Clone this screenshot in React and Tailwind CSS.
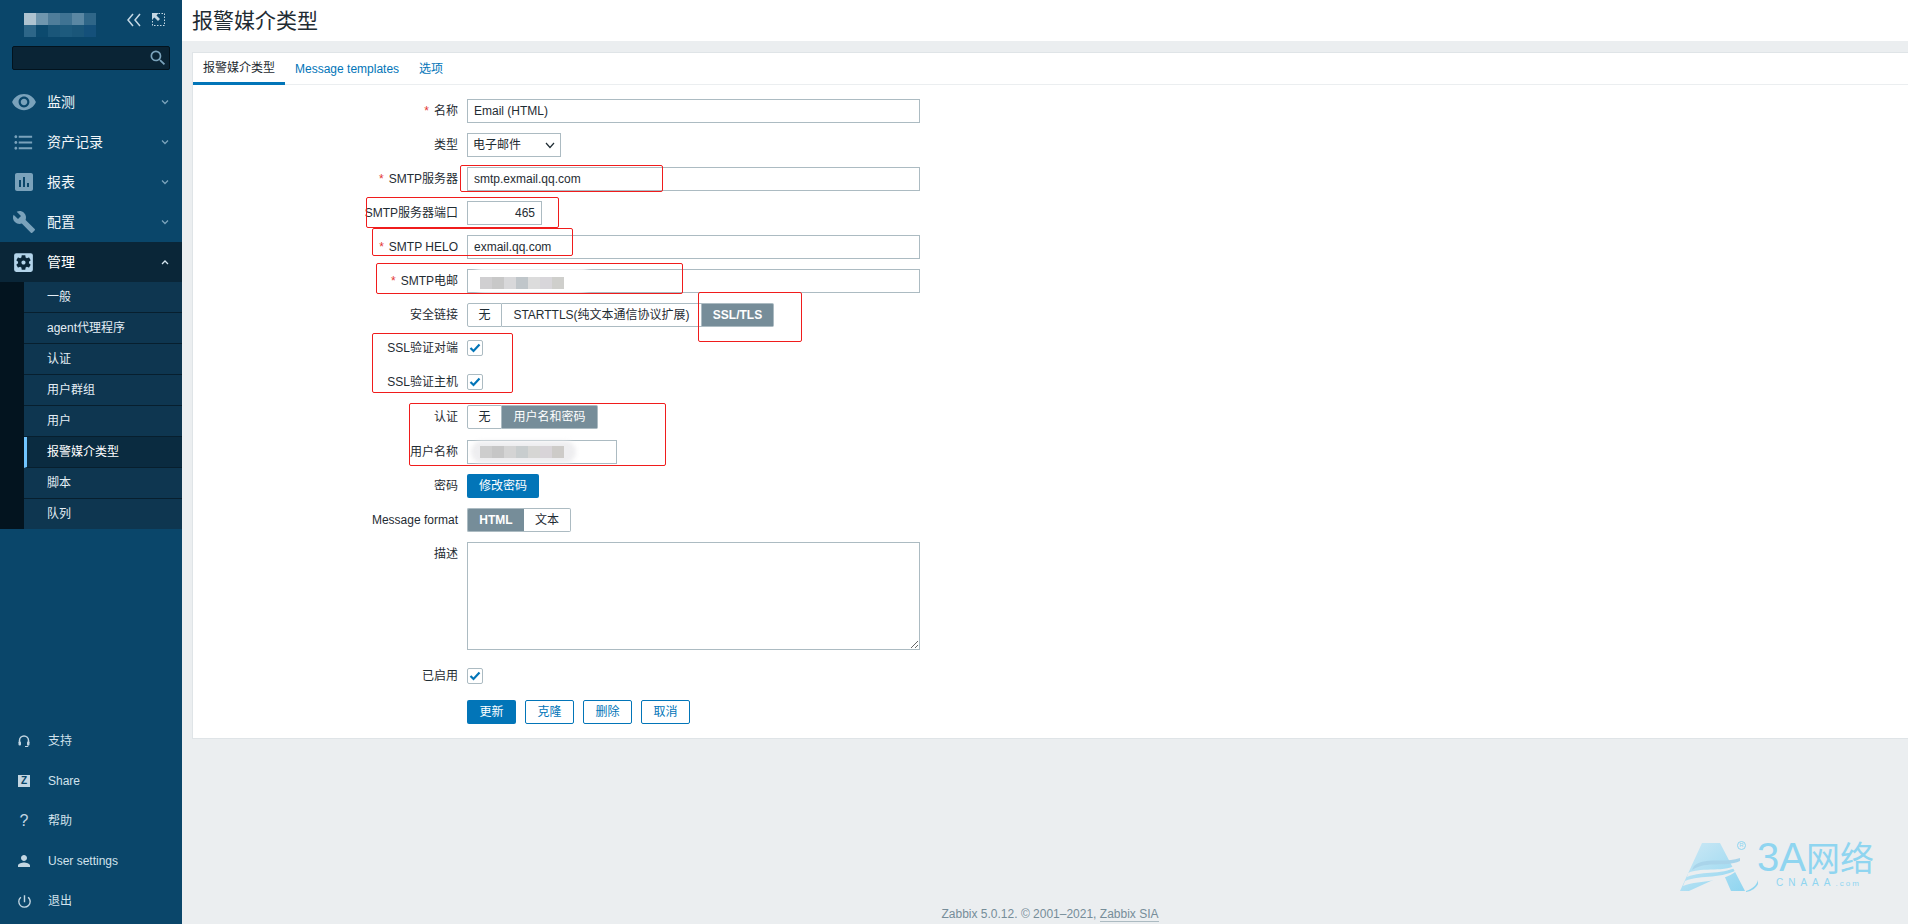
// App.jsx
// Zabbix media type edit page, with the red annotation boxes and watermark from the screenshot.

import { useState } from "react";
import {
  MdVisibility,
  MdFormatListBulleted,
  MdAssessment,
  MdBuild,
  MdSettingsApplications,
  MdSearch,
  MdPerson,
  MdPowerSettingsNew,
} from "react-icons/md";

const mainMenu = [
  { label: "监测", icon: MdVisibility, size: 26 },
  { label: "资产记录", icon: MdFormatListBulleted, size: 23 },
  { label: "报表", icon: MdAssessment, size: 24 },
  { label: "配置", icon: MdBuild, size: 24 },
];

const subMenu = ["一般", "agent代理程序", "认证", "用户群组", "用户", "报警媒介类型", "脚本", "队列"];

const redBoxes = [
  "left-[460px] top-[165px] w-[203px] h-[27px]",
  "left-[366px] top-[197px] w-[193px] h-[31px]",
  "left-[372px] top-[228px] w-[201px] h-[28px]",
  "left-[376px] top-[263px] w-[307px] h-[31px]",
  "left-[698px] top-[292px] w-[104px] h-[50px]",
  "left-[372px] top-[333px] w-[141px] h-[60px]",
  "left-[409px] top-[403px] w-[257px] h-[63px]",
];

function Chevron({ up }) {
  return (
    <svg width="8" height="6" viewBox="0 0 8 6" className={up ? "text-[#d5e6f1]" : "text-[#7aa2bb]"}>
      <polyline points={up ? "1,5 4,2 7,5" : "1,1.5 4,4.5 7,1.5"} fill="none" stroke="currentColor" strokeWidth="1.3" />
    </svg>
  );
}

function Mosaic({ cells }) {
  return (
    <div className="flex">
      {cells.map((c, i) => (
        <div key={i} className={`w-[12px] h-[12px] ${c}`} />
      ))}
    </div>
  );
}

function Sidebar() {
  return (
    <aside className="w-[182px] h-full shrink-0 bg-[#0a466a] flex flex-col text-[#f2f7fa]">
      {/* logo + collapse / kiosk */}
      <div className="h-[46px] flex pl-[24px] pt-[13px]">
        <div className="flex flex-col w-[72px]">
          <Mosaic cells={["bg-[#aec3d0]", "bg-[#6f96ae]", "bg-[#4f7d9a]", "bg-[#3f7393]", "bg-[#5a87a3]", "bg-[#2f6688]"]} />
          <Mosaic cells={["bg-[#2d6688]", "bg-[#0c4a6e]", "bg-[#1a5679]", "bg-[#1d5a7d]", "bg-[#1a5679]", "bg-[#14507a]"]} />
        </div>
        <svg width="16" height="14" viewBox="0 0 16 14" className="ml-[30px] text-[#c5d8e4]">
          <path d="M7 1 L2 7 L7 13 M14 1 L9 7 L14 13" fill="none" stroke="currentColor" strokeWidth="1.5" />
        </svg>
        <svg width="13" height="13" viewBox="0 0 13 13" className="ml-[10px] text-[#c5d8e4]">
          <rect x="0.5" y="0.5" width="12" height="12" fill="none" stroke="currentColor" strokeDasharray="1.5 1.5" />
          <path d="M0 0 H6.5 L4.5 2.5 L8 6 L6 8 L2.5 4.5 L0 6.5 Z" fill="currentColor" />
        </svg>
      </div>

      {/* search */}
      <div className="relative mx-[12px] h-[24px] bg-[#0a2435] border border-[#02131e] rounded-[2px]">
        <MdSearch size={20} className="absolute right-[1px] top-[1px] text-[#7aa2bb]" />
      </div>

      {/* main menu */}
      <nav className="mt-[12px] text-[14px]">
        {mainMenu.map((item) => (
          <div key={item.label} className="h-[40px] flex items-center">
            <div className="w-[47px] flex justify-center text-[#7aa2bb]">
              <item.icon size={item.size} />
            </div>
            <span>{item.label}</span>
            <span className="ml-auto mr-[13px] flex">
              <Chevron />
            </span>
          </div>
        ))}
        <div className="h-[40px] flex items-center bg-[#0a2638] text-white">
          <div className="w-[47px] flex justify-center text-[#b3d4ea]">
            <MdSettingsApplications size={25} />
          </div>
          <span>管理</span>
          <span className="ml-auto mr-[13px] flex">
            <Chevron up />
          </span>
        </div>
        <div className="flex bg-[#03141f] pl-[24px]">
          <ul className="flex-1 text-[12px]">
            {subMenu.map((s) => (
              <li
                key={s}
                className={
                  s === "报警媒介类型"
                    ? "h-[31px] flex items-center bg-[#0a2b40] border-b border-[#071f2e] border-l-[3px] border-l-[#70c5ff] pl-[20px] text-white"
                    : "h-[31px] last:h-[30px] last:border-b-0 flex items-center bg-[#0e3650] border-b border-[#071f2e] pl-[23px] text-[#e4eef5]"
                }
              >
                {s}
              </li>
            ))}
          </ul>
        </div>
      </nav>

      {/* bottom links */}
      <div className="mt-auto mb-[3px] text-[12px] text-[#d2e2ec]">
        <BottomLink label="支持">
          <svg width="12" height="13" viewBox="0 0 12 13" fill="none">
            <path d="M1.5 8 V5.5 a4.5 4.5 0 0 1 9 0 V8" stroke="currentColor" strokeWidth="1.5" />
            <rect x="0.5" y="6.5" width="2.5" height="4" rx="1" fill="currentColor" />
            <rect x="9" y="6.5" width="2.5" height="4" rx="1" fill="currentColor" />
            <path d="M10 10.5 V11.5 H7" stroke="currentColor" />
          </svg>
        </BottomLink>
        <BottomLink label="Share">
          <span className="w-[12px] h-[12px] bg-[#c3d6e2] text-[#0a466a] text-[10px] leading-[12px] font-bold text-center">Z</span>
        </BottomLink>
        <BottomLink label="帮助">
          <span className="text-[16px] text-[#c3d6e2]">?</span>
        </BottomLink>
        <BottomLink label="User settings">
          <MdPerson size={18} />
        </BottomLink>
        <BottomLink label="退出">
          <MdPowerSettingsNew size={17} />
        </BottomLink>
      </div>
    </aside>
  );
}

function BottomLink({ label, children }) {
  return (
    <div className="h-[40px] flex items-center">
      <div className="w-[48px] flex justify-center text-[#c3d6e2]">{children}</div>
      <span>{label}</span>
    </div>
  );
}

function Row({ label, required, className = "h-[24px]", labelClass = "items-center", children }) {
  return (
    <div className={`flex ${className}`}>
      <label className={`w-[265px] shrink-0 flex justify-end whitespace-nowrap ${labelClass}`}>
        {required && <span className="text-[#e33734] mr-[5px]">*</span>}
        {label}
      </label>
      <div className="ml-[9px] flex items-center">{children}</div>
    </div>
  );
}

function TextInput({ value, width = "w-[453px]", right }) {
  return (
    <input
      readOnly
      value={value}
      className={`${width} h-[24px] border border-[#acbbc2] bg-white px-[6px] text-[12px] outline-none ${right ? "text-right" : ""}`}
    />
  );
}

function Segmented({ options, active }) {
  return (
    <div className="flex h-[24px]">
      {options.map(([label, width], i) => {
        const on = label === active;
        const first = i === 0;
        const last = i === options.length - 1;
        // the Chinese labels stay regular when selected, only latin ones go bold
        const latin = /^[A-Za-z/]+$/.test(label);
        return (
          <div
            key={label}
            className={[
              "flex items-center justify-center border-y border-[#acbbc2]",
              width,
              on ? "bg-[#768d99] border-[#768d99] text-white" : "bg-white",
              on && latin ? "font-bold" : "",
              first ? "border-l rounded-l-[2px]" : "",
              last ? "border-r rounded-r-[2px]" : "",
              !on && !last ? "border-r" : "",
            ].join(" ")}
          >
            {label}
          </div>
        );
      })}
    </div>
  );
}

function Check() {
  const [on, setOn] = useState(true);
  return (
    <button
      onClick={() => setOn(!on)}
      className="w-[16px] h-[16px] border border-[#acbbc2] rounded-[2px] bg-white flex items-center justify-center"
    >
      {on && (
        <svg width="12" height="10" viewBox="0 0 12 10">
          <path d="M1.5 5 L4.5 8 L10.5 1.5" fill="none" stroke="#0275b8" strokeWidth="2.2" />
        </svg>
      )}
    </button>
  );
}

function Watermark() {
  return (
    <div className="absolute left-[1680px] top-[842px] w-[200px] h-[50px] text-[#8fd5f0]">
      <svg width="78" height="50" viewBox="0 0 78 50" className="absolute left-0 top-0">
        <defs>
          <linearGradient id="wm" x1="0" y1="0" x2="1" y2="1">
            <stop offset="0" stopColor="#cfe9f5" />
            <stop offset="1" stopColor="#8fd5f0" />
          </linearGradient>
        </defs>
        <path d="M0 49 L22 1 H40 L65 49 H51 L44 33 L9 49 Z" fill="url(#wm)" />
        <path d="M14 24 C26 14 44 22 60 16 L60 19 C44 26 28 18 12 28 Z" fill="#a9d4ea" />
        <path d="M8 31 C24 24 44 32 60 21 V23 C44 34 24 28 7 35 Z M5 39 C22 32 42 38 60 26 C44 42 22 37 3 44 Z" fill="#ebeef0" />
        <path d="M66 49 C72 47 77 43 78 38 L78 42 C76 46 72 49 66 50 Z" fill="#8fd5f0" />
      </svg>
      <span className="absolute left-[57px] top-[-1px] w-[9px] h-[9px] rounded-full border border-[#8fd5f0] text-[6px] leading-[7px] text-center">R</span>
      <div className="absolute left-[77px] top-[-3px] h-[36px] flex items-baseline text-[40px] leading-[36px] whitespace-nowrap">
        3A
        <span className="text-[34px]">网络</span>
      </div>
      <div className="absolute left-[96px] top-[36px] h-[10px] text-[10px] tracking-[5px] leading-[10px] whitespace-nowrap">
        CNAAA<span className="text-[8px] tracking-[2px]">.com</span>
      </div>
    </div>
  );
}

export default function App() {
  return (
    <div className="relative flex w-screen h-screen overflow-hidden bg-[#ebeef0] text-[12px] text-[#1f2c33] font-['Liberation_Sans','Noto_Sans_CJK_SC',sans-serif]">
      <Sidebar />

      <main className="flex-1 min-w-0 flex flex-col">
        <header className="h-[41px] shrink-0 bg-white pl-[10px] flex items-center text-[21px]">报警媒介类型</header>

        <div className="flex-1 pl-[10px] pt-[11px] flex flex-col">
          <section className="bg-white border border-[#dfe4e7] border-r-0">
            {/* tabs */}
            <div className="flex h-[32px] border-b border-[#ebeef0]">
              <div className="h-[32px] px-[10px] flex items-center border-b-[3px] border-[#0275b8]">报警媒介类型</div>
              <div className="h-[32px] px-[10px] flex items-center text-[#0275b8]">Message templates</div>
              <div className="h-[32px] px-[10px] flex items-center text-[#0275b8]">选项</div>
            </div>

            {/* form */}
            <form className="pt-[14px] pb-[14px] flex flex-col">
              <Row label="名称" required>
                <TextInput value="Email (HTML)" />
              </Row>
              <Row label="类型" className="h-[24px] mt-[10px]">
                <div className="w-[94px] h-[24px] border border-[#acbbc2] pl-[5px] pr-[5px] flex items-center justify-between">
                  电子邮件
                  <svg width="10" height="7" viewBox="0 0 10 7">
                    <polyline points="1,1 5,5.5 9,1" fill="none" stroke="#1f2c33" strokeWidth="1.2" />
                  </svg>
                </div>
              </Row>
              <Row label="SMTP服务器" required className="h-[24px] mt-[10px]">
                <TextInput value="smtp.exmail.qq.com" />
              </Row>
              <Row label="SMTP服务器端口" className="h-[24px] mt-[10px]">
                <TextInput value="465" width="w-[75px]" right />
              </Row>
              <Row label="SMTP HELO" required className="h-[24px] mt-[10px]">
                <TextInput value="exmail.qq.com" />
              </Row>
              <Row label="SMTP电邮" required className="h-[24px] mt-[10px]">
                <div className="relative">
                  <TextInput value="" />
                  <div className="absolute left-[5px] top-[-3px] w-[120px] h-[28px] rounded-full bg-white/80 blur-[2px]" />
                  <div className="absolute left-[13px] top-[8px]">
                    <Mosaic cells={["bg-[#d0cfd1]", "bg-[#c8c8c8]", "bg-[#d8d8da]", "bg-[#c0c6ca]", "bg-[#dcdcdc]", "bg-[#d8d6da]", "bg-[#cfcfcc]"]} />
                  </div>
                </div>
              </Row>
              <Row label="安全链接" className="h-[24px] mt-[10px]">
                <Segmented options={[["无", "w-[35px]"], ["STARTTLS(纯文本通信协议扩展)", "w-[200px]"], ["SSL/TLS", "w-[72px]"]]} active="SSL/TLS" />
              </Row>
              <Row label="SSL验证对端" className="h-[16px] mt-[13px]">
                <Check />
              </Row>
              <Row label="SSL验证主机" className="h-[16px] mt-[18px]">
                <Check />
              </Row>
              <Row label="认证" className="h-[24px] mt-[15px]">
                <Segmented options={[["无", "w-[35px]"], ["用户名和密码", "w-[96px]"]]} active="用户名和密码" />
              </Row>
              <Row label="用户名称" className="h-[24px] mt-[11px]">
                <div className="relative">
                  <TextInput value="" width="w-[150px]" />
                  <div className="absolute left-[4px] top-[1px] w-[105px] h-[22px] rounded-full bg-[#eeeef0] blur-[2px]" />
                  <div className="absolute left-[13px] top-[6px]">
                    <Mosaic cells={["bg-[#cdcdcd]", "bg-[#c6c6c6]", "bg-[#d4d4d4]", "bg-[#c8cdce]", "bg-[#d6d6d4]", "bg-[#d8d4d8]", "bg-[#cdcbc8]"]} />
                  </div>
                </div>
              </Row>
              <Row label="密码" className="h-[24px] mt-[10px]">
                <button type="button" className="w-[72px] h-[24px] bg-[#0275b8] text-white rounded-[2px]">修改密码</button>
              </Row>
              <Row label="Message format" className="h-[24px] mt-[10px]">
                <Segmented options={[["HTML", "w-[57px]"], ["文本", "w-[47px]"]]} active="HTML" />
              </Row>
              <Row label="描述" className="h-[108px] mt-[10px]" labelClass="items-start pt-[3px]">
                <textarea readOnly className="w-[453px] h-[108px] border border-[#acbbc2] bg-white outline-none block" />
              </Row>
              <Row label="已启用" className="h-[16px] mt-[18px]">
                <Check />
              </Row>
              <Row label="" className="h-[24px] mt-[16px]">
                <div className="flex gap-[9px]">
                  <button type="button" className="w-[49px] h-[24px] bg-[#0275b8] text-white rounded-[2px]">更新</button>
                  <button type="button" className="w-[49px] h-[24px] border border-[#0275b8] text-[#0275b8] rounded-[2px]">克隆</button>
                  <button type="button" className="w-[49px] h-[24px] border border-[#0275b8] text-[#0275b8] rounded-[2px]">删除</button>
                  <button type="button" className="w-[49px] h-[24px] border border-[#0275b8] text-[#0275b8] rounded-[2px]">取消</button>
                </div>
              </Row>
            </form>
          </section>

          <footer className="mt-auto mb-[3px] h-[14px] leading-[14px] text-center text-[#768d99]">
            Zabbix 5.0.12. © 2001–2021, <span className="border-b border-[#acbbc2]">Zabbix SIA</span>
          </footer>
        </div>
      </main>

      <Watermark />

      {/* red annotation boxes drawn over the page */}
      {redBoxes.map((box) => (
        <div key={box} className={`absolute ${box} border border-[#f01c1c] rounded-[2px] pointer-events-none`} />
      ))}
    </div>
  );
}
